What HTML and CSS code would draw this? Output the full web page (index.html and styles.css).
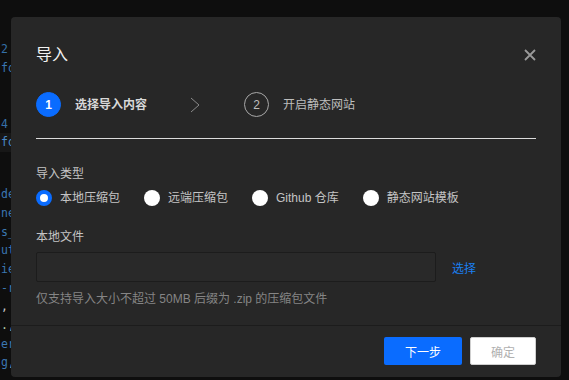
FILE: index.html
```html
<!DOCTYPE html>
<html lang="zh-CN">
<head>
    <meta charset="UTF-8">
    <meta name="viewport" content="width=device-width, initial-scale=1.0">
    <title>导入</title>
    <link rel="stylesheet" href="styles.css">
</head>
<body>
    <!-- 背后的编辑器 (只露出左边一条) -->
    <div class="editor">
        <div class="code-block first">
            <div class="code-line num">2</div>
            <div class="code-line">fo</div>
            <div class="code-line"></div>
            <div class="code-line"></div>
            <div class="code-line num">4</div>
            <div class="code-line current">fo</div>
        </div>
        <div class="code-block">
            <div class="code-line">de</div>
            <div class="code-line">ne</div>
            <div class="code-line">s_</div>
            <div class="code-line">ut</div>
            <div class="code-line">ie</div>
            <div class="code-line">-r</div>
            <div class="code-line plain">,</div>
            <div class="code-line plain"><span class="lit">.</span>,</div>
            <div class="code-line">er</div>
            <div class="code-line">g<span class="plainc">,</span></div>
        </div>
    </div>

    <!-- 导入弹窗 -->
    <div class="modal">
        <div class="modal-header">
            <div class="modal-title">导入</div>
            <svg class="close-icon" width="12" height="12" viewBox="0 0 12 12">
                <path d="M1 1 L11 11 M11 1 L1 11" stroke="#9a9a9a" stroke-width="1.8" fill="none"/>
            </svg>
        </div>

        <div class="steps">
            <div class="step active">
                <span class="step-num">1</span>
                <span class="step-text">选择导入内容</span>
            </div>
            <svg class="step-arrow" width="12" height="16" viewBox="0 0 12 16">
                <polyline points="2,1 10,8 2,15" stroke="#8a8a8a" stroke-width="1" fill="none"/>
            </svg>
            <div class="step">
                <span class="step-num">2</span>
                <span class="step-text">开启静态网站</span>
            </div>
        </div>

        <div class="modal-body">
            <div class="field-label">导入类型</div>
            <div class="radio-group">
                <label class="radio-item checked"><span class="radio"></span>本地压缩包</label>
                <label class="radio-item"><span class="radio"></span>远端压缩包</label>
                <label class="radio-item"><span class="radio"></span>Github 仓库</label>
                <label class="radio-item"><span class="radio"></span>静态网站模板</label>
            </div>

            <div class="field-label second">本地文件</div>
            <div class="file-row">
                <div class="file-input"></div>
                <a class="file-pick">选择</a>
            </div>
            <div class="hint">仅支持导入大小不超过 50MB 后缀为 .zip 的压缩包文件</div>
        </div>

        <div class="modal-footer">
            <button type="button" class="btn btn-primary">下一步</button>
            <button type="button" class="btn btn-disabled">确定</button>
        </div>
    </div>
</body>
</html>
```

FILE: styles.css
```css
/* 页面 */
body {
    margin: 0;
    width: 569px;
    height: 380px;
    overflow: hidden;
    background-color: #0e0e0e;
    font-family: "Liberation Sans", "Noto Sans CJK SC", sans-serif;
}

/* 背后的编辑器 */
.editor {
    width: 11px;
    overflow: hidden;
    padding-top: 40px;
    font-family: "DejaVu Sans Mono", monospace;
    font-size: 11.5px;
    color: #3b77b2;
}

.code-block.first {
    margin-bottom: 33px;
}

.code-line {
    height: 18.7px;
    line-height: 18.7px;
    padding-left: 1px;
    white-space: pre;
}

.code-line.num {
    color: #3570a8;
}

.code-line.current {
    background-color: #171717;
    color: #4a8ac8;
}

.code-line.plain,
.plainc {
    color: #c8c8c8;
}

.lit {
    color: #b5cea8;
}

/* 弹窗 */
.modal {
    position: absolute;
    top: 17px;
    left: 11px;
    width: 550px;
    height: 360px;
    background-color: #272727;
    border-radius: 4px;
    display: flex;
    flex-direction: column;
    color: #c4c4c4;
}

.modal-header {
    display: flex;
    justify-content: space-between;
    align-items: center;
    padding: 28px 25px 0;
}

.modal-title {
    font-size: 16px;
    line-height: 20px;
    color: #f2f2f2;
}

.close-icon {
    display: block;
}

/* 步骤条 */
.steps {
    display: flex;
    align-items: center;
    margin: 27px 25px 0;
    padding-bottom: 21px;
    border-bottom: 1px solid #dcdcdc;
}

.step {
    display: flex;
    align-items: center;
    gap: 14px;
}

.step-num {
    width: 25px;
    height: 25px;
    box-sizing: border-box;
    border: 1px solid #a8a8a8;
    border-radius: 50%;
    display: flex;
    align-items: center;
    justify-content: center;
    font-size: 12px;
    color: #bdbdbd;
}

.step.active .step-num {
    border-color: #0a6cff;
    background-color: #0a6cff;
    color: #fff;
    font-weight: bold;
}

.step-text {
    font-size: 12px;
    line-height: 16px;
    color: #bdbdbd;
}

.step.active .step-text {
    font-weight: bold;
    color: #d8d8d8;
}

.step-arrow {
    display: block;
    margin: 0 43px 0 42px;
}

/* 表单 */
.modal-body {
    flex: 1;
    padding: 27px 25px 0;
}

.field-label {
    font-size: 12px;
    line-height: 16px;
    color: #c4c4c4;
}

.field-label.second {
    margin-top: 23px;
}

.radio-group {
    display: flex;
    gap: 24px;
    margin-top: 8px;
}

.radio-item {
    display: flex;
    align-items: center;
    gap: 8px;
    font-size: 12px;
    line-height: 16px;
    color: #c4c4c4;
}

.radio {
    width: 16px;
    height: 16px;
    box-sizing: border-box;
    border-radius: 50%;
    background-color: #fff;
}

.radio-item.checked .radio {
    border: 4px solid #0a6cff;
}

.file-row {
    display: flex;
    align-items: center;
    gap: 16px;
    margin-top: 7px;
}

.file-input {
    width: 400px;
    height: 30px;
    box-sizing: border-box;
    border: 1px solid #1c1c1c;
    border-radius: 2px;
    background-color: #292929;
}

.file-pick {
    font-size: 12px;
    color: #1a7ff0;
    cursor: pointer;
}

.hint {
    margin-top: 9px;
    font-size: 12px;
    line-height: 16px;
    color: #858585;
}

/* 底部按钮 */
.modal-footer {
    display: flex;
    justify-content: flex-end;
    gap: 8px;
    padding: 11px 25px 12px;
    border-top: 1px solid #1c1c1c;
}

.btn {
    height: 28px;
    border-radius: 2px;
    font-family: "Liberation Sans", "Noto Sans CJK SC", sans-serif;
    font-size: 12px;
    cursor: pointer;
}

.btn-primary {
    width: 78px;
    border: none;
    background-color: #0a6cff;
    color: #fff;
}

.btn-disabled {
    width: 66px;
    border: 1px solid #cfcfcf;
    background-color: #fff;
    color: #b0b0b0;
}
```
